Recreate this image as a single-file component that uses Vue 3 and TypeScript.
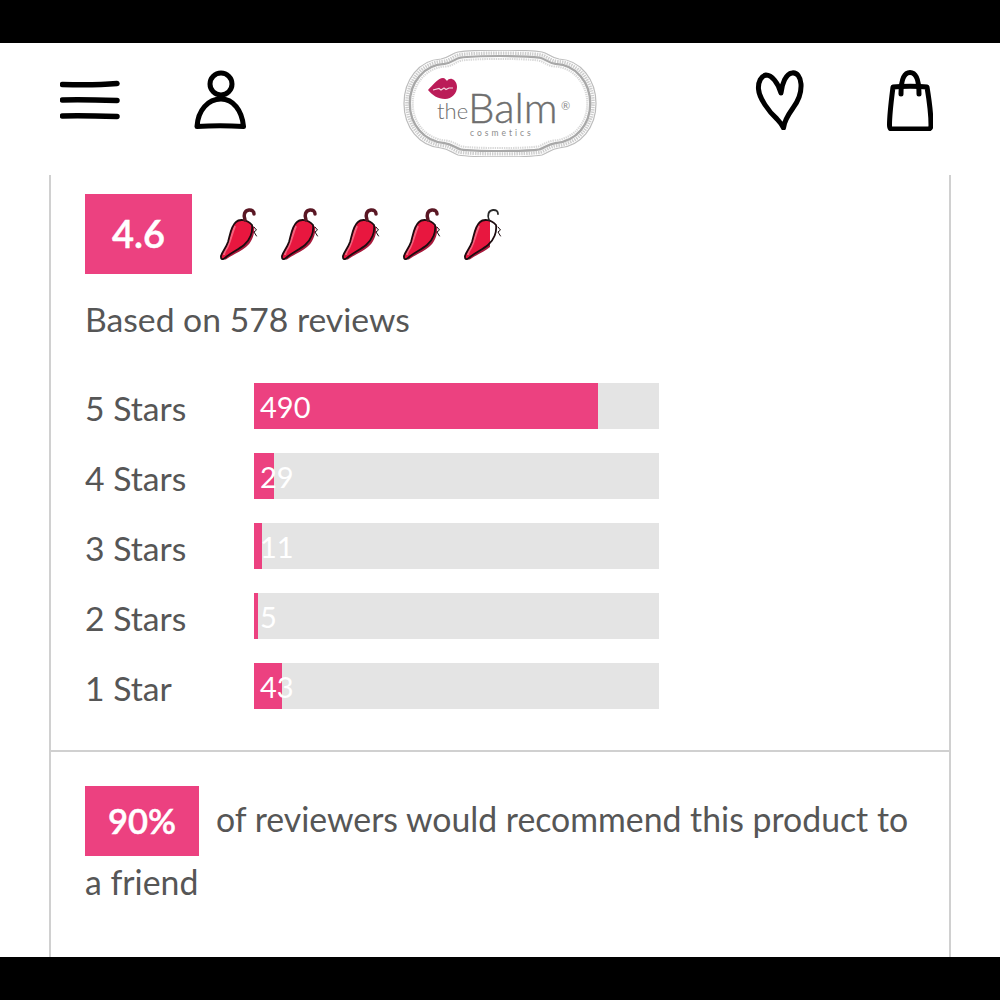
<template>
  <div class="screen">
    <header class="topbar">
      <div class="nav-left">
        <svg class="ic-menu" viewBox="0 0 60 40" width="60" height="40">
          <path d="M2.500 4.500 C20 5 40 5 57 3.500 M2.500 20 C20 19.500 40 20 57 20.500 M2.500 36 C20 35.500 40 36 57 36.500" />
        </svg>
        <svg class="ic-user" viewBox="0 0 52 60" width="52" height="60">
          <circle cx="27" cy="14" r="11" />
          <path d="M3 56.500 C4 40 14 29 27 29 C39 29 48 40 49.500 56.500 C34 55.500 18 55.500 3 56.500Z" />
        </svg>
      </div>
      <svg class="logo" viewBox="0 0 194 107" width="194" height="107">
        <path class="frame-outer" :d="framePath" />
        <path class="frame-dots" :d="framePath" transform="translate(97 53.500) scale(.97 .945) translate(-97 -53.500)" />
        <path class="frame-band" :d="framePath" transform="translate(97 53.500) scale(.94 .89) translate(-97 -53.500)" />
        <path class="frame-dots inner" :d="framePath" transform="translate(97 53.500) scale(.91 .835) translate(-97 -53.500)" />
        <path class="lips" d="M25 40 C29 36 35 28 40 28 C42 28 43 30 44 31 C45 29.500 47 28.500 49 29 C52 30 54 33 54 37 C54 43 49 49 42 49 C35 49 29 45 25 40Z" />
        <path class="lips-line" d="M30 40 L36 38.500 L38 40 L41 38 L43 39.500 L46 38 L50 38" />
        <text class="logo-the" x="34" y="69">the</text>
        <text class="logo-balm" x="65" y="73">Balm</text>
        <text class="logo-reg" x="158" y="60">®</text>
        <text class="logo-sub" x="67" y="86">cosmetics</text>
      </svg>
      <div class="nav-right">
        <svg class="ic-heart" viewBox="0 0 50 60" width="50" height="60">
          <path d="M27 23 C24 13 18 5 12 5 C7 6 4 12 4.500 19 C5 28 15 42 23 49 C26 52 28 55 29.500 58 C30 52 34 45 39 38 C45 30 47.500 22 47 14 C46.500 7 43 2 38 3 C32 4 28 13 27 23Z" />
        </svg>
        <svg class="ic-bag" viewBox="0 0 46 62" width="46" height="62">
          <path d="M6 18 C15 17 32 17 40 18 C42 30 44 45 44 56 C44 59 43 60 41 60 C30 60 15 60 5 60 C3 60 2.500 59 2.500 56 C2.500 45 4.500 30 6 18Z" />
          <path d="M14 25 C14 15 15 3.500 23 3.500 C31 3.500 32 15 32 25" />
        </svg>
      </div>
    </header>

    <main class="card">
      <section class="summary">
        <div class="score-row">
          <div class="score">4.6</div>
          <div class="chilis">
            <svg v-for="n in 5" :key="n" class="chili" viewBox="0 0 40 54" width="40" height="54">
              <defs>
                <clipPath :id="`chili-clip-${n}`">
                  <rect x="0" y="0" :width="n === 5 ? 27 : 40" height="54" />
                </clipPath>
              </defs>
              <g :clip-path="`url(#chili-clip-${n})`">
                <path class="chili-shadow" d="M20 17 C24 14 31 16 35 20 C36 27 33 35 27 40 C21 45 13 48 6 53 Z" />
                <path class="chili-body" :d="chiliBody" />
                <path class="chili-light" d="M16 19 C13 26 12 33 8 41 C6 44 5 46 5 48" />
              </g>
              <path class="chili-line" :d="chiliBody" />
              <path class="chili-stem" :class="{ empty: n === 5 }" d="M26 13 C24 8 25.500 3.500 30 3 C33 2.800 35 4 35 7" />
              <path class="chili-tick" d="M35 20 L37.500 23 L35 25 L37.500 29" />
            </svg>
          </div>
        </div>
        <p class="based">Based on 578 reviews</p>
        <div class="rows">
          <div v-for="row in rows" :key="row.label" class="row">
            <span class="row-label">{{ row.label }}</span>
            <div class="track">
              <div class="fill" :style="{ width: row.fill + 'px' }"></div>
              <span class="count">{{ row.count }}</span>
            </div>
          </div>
        </div>
      </section>
      <section class="recommend">
        <p class="rec-text"><span class="pct">90%</span>of reviewers would recommend this product to a friend</p>
      </section>
    </main>
  </div>
</template>

<script setup lang="ts">
interface ReviewRow {
  label: string
  count: number
  fill: number
}

const framePath =
  'M55 2 C70 -.5 124 -.5 139 2 C145 3 148 8 156 9 C178 10 193 30 193 53.500 C193 77 178 96 156 98 C148 99 145 103 139 105 C124 107.500 70 107.500 55 105 C49 103 46 99 38 98 C16 96 1 77 1 53.500 C1 30 16 10 38 9 C46 8 49 3 55 2Z'

const chiliBody =
  'M17 15 C20 12 28 12 33 18 C34 25 31 33 25 38 C19 43 11 46 6 51 C4 53 1.500 52.500 2 49 C3 45 7 41 9 35 C11 28 12 19 17 15Z'

const rows: ReviewRow[] = [
  { label: '5 Stars', count: 490, fill: 344 },
  { label: '4 Stars', count: 29, fill: 20 },
  { label: '3 Stars', count: 11, fill: 8 },
  { label: '2 Stars', count: 5, fill: 4 },
  { label: '1 Star', count: 43, fill: 28 }
]
</script>

<style>
html,
body {
  margin: 0;
  background: #000;
}
</style>

<style scoped>
.screen {
  box-sizing: border-box;
  width: 1000px;
  height: 1000px;
  border-top: 43px solid #000;
  border-bottom: 43px solid #000;
  background: #fff;
  overflow: hidden;
  font-family: Lato, "Open Sans", sans-serif;
  color: #565656;
}

.topbar {
  box-sizing: border-box;
  display: grid;
  grid-template-columns: 1fr auto 1fr;
  align-items: center;
  height: 132px;
  padding: 0 60px 18px;
}

.topbar svg {
  display: block;
}

.nav-left {
  display: flex;
  align-items: center;
  gap: 74px;
}

.nav-right {
  display: flex;
  align-items: center;
  justify-content: flex-end;
  gap: 83px;
  padding-right: 7px;
}

.logo {
  margin-top: 6px;
}

.ic-menu path {
  fill: none;
  stroke: #000;
  stroke-width: 5.500;
  stroke-linecap: round;
}

.ic-user circle,
.ic-user path,
.ic-heart path,
.ic-bag path {
  fill: none;
  stroke: #000;
  stroke-width: 5;
  stroke-linecap: round;
  stroke-linejoin: round;
}

.frame-outer {
  fill: #fff;
  stroke: #bcbcbc;
  stroke-width: 1.200;
}

.frame-dots {
  fill: none;
  stroke: #cdcdcd;
  stroke-width: 3.500;
  stroke-dasharray: 1.500 1;
}

.frame-band {
  fill: none;
  stroke: #a8a8a8;
  stroke-width: 2.500;
}

.frame-dots.inner {
  stroke-width: 2.500;
  stroke: #d8d8d8;
}

.lips {
  fill: #bb1c58;
}

.lips-line {
  fill: none;
  stroke: #f3d5df;
  stroke-width: 1.200;
}

.logo-the {
  font-size: 22px;
  font-weight: 300;
  fill: #6e6e6e;
}

.logo-balm {
  font-size: 42px;
  font-weight: 300;
  fill: #6e6e6e;
  stroke: #6e6e6e;
  stroke-width: .4;
}

.logo-reg {
  font-size: 11px;
  fill: #8c8c8c;
}

.logo-sub {
  font-size: 8.500px;
  letter-spacing: 3px;
  fill: #8c8c8c;
}

.card {
  box-sizing: border-box;
  width: 902px;
  height: 782px;
  margin-left: 49px;
  border-left: 2px solid #d0d0d0;
  border-right: 2px solid #d0d0d0;
}

.summary {
  box-sizing: border-box;
  height: 577px;
  padding: 19px 34px 0;
  border-bottom: 2px solid #d0d0d0;
}

.score-row {
  display: flex;
  align-items: center;
  gap: 27px;
}

.score {
  width: 107px;
  height: 80px;
  background: #ec4180;
  color: #fff;
  font-size: 38px;
  font-weight: 600;
  line-height: 78px;
  text-align: center;
  -webkit-text-stroke: .5px #fff;
}

.chilis {
  display: flex;
  gap: 21px;
}

.chili {
  display: block;
}

.chili-shadow {
  fill: #a81a3c;
}

.chili-body {
  fill: #e8173f;
}

.chili-light {
  fill: none;
  stroke: #f2647e;
  stroke-width: 2;
}

.chili-line,
.chili-stem,
.chili-tick {
  fill: none;
  stroke: #1d0b0f;
  stroke-width: 1.800;
  stroke-linecap: round;
  stroke-linejoin: round;
}

.chili-stem {
  stroke: #5a1724;
  stroke-width: 3.500;
}

.chili-stem.empty {
  stroke: #2a2a2a;
  stroke-width: 1.800;
}

.chili-tick {
  stroke-width: 1;
}

.based {
  margin: 23px 0 0;
  font-size: 33.700px;
  line-height: 44px;
}

.rows {
  display: flex;
  flex-direction: column;
  gap: 24px;
  margin-top: 42px;
}

.row {
  display: flex;
  align-items: center;
  height: 46px;
}

.row-label {
  position: relative;
  top: 2px;
  width: 169px;
  font-size: 33.700px;
  line-height: 46px;
}

.track {
  position: relative;
  width: 405px;
  height: 46px;
  background: #e4e4e4;
}

.fill {
  height: 100%;
  background: #ec4180;
}

.count {
  position: absolute;
  left: 6px;
  top: 0;
  color: #fff;
  font-size: 29px;
  line-height: 48px;
}

.recommend {
  padding: 36px 34px 0;
}

.rec-text {
  margin: 0;
  font-size: 33.800px;
  line-height: 63px;
}

.pct {
  display: inline-block;
  width: 114px;
  height: 70px;
  margin: -8px 17px -8px 0;
  background: #ec4180;
  color: #fff;
  font-size: 34.500px;
  font-weight: 600;
  line-height: 70px;
  text-align: center;
  vertical-align: -2px;
  -webkit-text-stroke: .5px #fff;
}
</style>
